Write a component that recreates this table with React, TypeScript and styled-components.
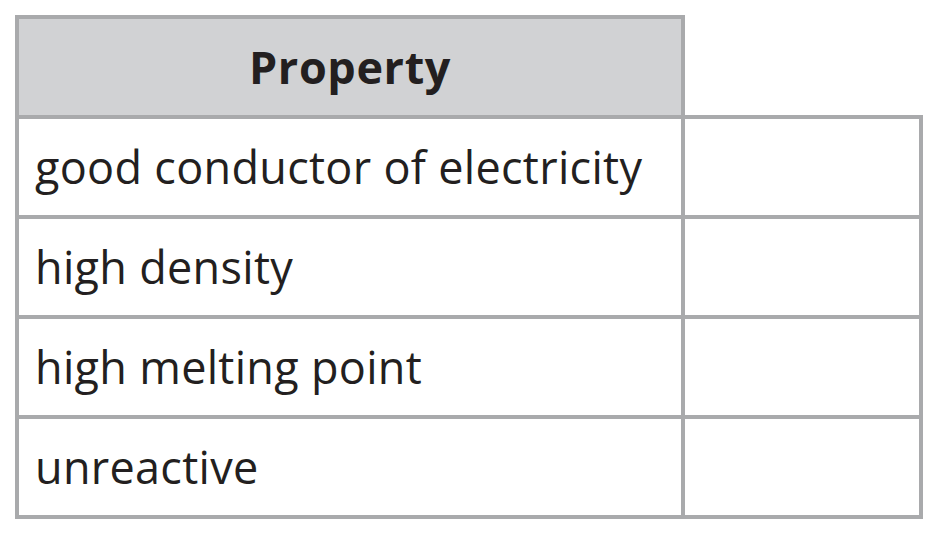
import React from "react";
import styled, { createGlobalStyle } from "styled-components";

const Global = createGlobalStyle`
  html, body { margin: 0; padding: 0; background: #ffffff; }
  body { font-family: "Open Sans", "Noto Sans", sans-serif; }
`;

const Page = styled.div`
  padding: 15px 0 0 15px;
`;

const Table = styled.table`
  border-collapse: collapse;
  table-layout: fixed;
  width: 904px;
`;

const Row = styled.tr`
  height: 100px;
`;

const Cell = styled.td<{ $head?: boolean; $blank?: boolean }>`
  border: 4px solid #a9aaac;
  padding: 0 0 0 16px;
  box-sizing: border-box;
  color: #231f20;
  font-size: 45px;
  line-height: 1.2;
  letter-spacing: 0.3px;
  vertical-align: middle;
  white-space: nowrap;
  ${(p) => p.$head && `
    background: #d1d2d4;
    font-weight: 700;
    text-align: center;
    padding: 0;
    letter-spacing: 0.6px;
  `}
  ${(p) => p.$blank && `
    border-top: none;
    border-right: none;
  `}
`;

const rows = [
  "good conductor of electricity",
  "high density",
  "high melting point",
  "unreactive",
];

export default function App() {
  return (
    <>
      <Global />
      <Page>
        <Table>
          <colgroup>
            <col style={{ width: 666 }} />
            <col style={{ width: 238 }} />
          </colgroup>
          <tbody>
            <Row>
              <Cell as="th" $head>Property</Cell>
              <Cell $blank />
            </Row>
            {rows.map((r) => (
              <Row key={r}>
                <Cell>{r}</Cell>
                <Cell />
              </Row>
            ))}
          </tbody>
        </Table>
      </Page>
    </>
  );
}
